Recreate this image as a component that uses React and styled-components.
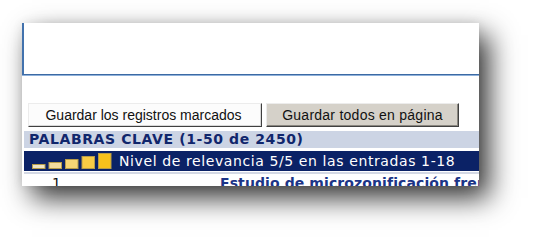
import React from "react"
import styled, { createGlobalStyle } from "styled-components"

const Global = createGlobalStyle`
  html, body {
    margin: 0;
    padding: 0;
    background: #ffffff;
    overflow: hidden;
  }
`

const Stage = styled.div`
  width: 534px;
  height: 241px;
  padding: 23px 0 0 22px;
  box-sizing: border-box;
`

const Card = styled.div`
  width: 457px;
  height: 163px;
  background: #ffffff;
  overflow: hidden;
  box-shadow: 10px 12px 26px rgba(0, 0, 0, 0.8), 0 0 10px rgba(0, 0, 0, 0.08);
  display: flex;
  flex-direction: column;
`

const TextBox = styled.div`
  height: 51px;
  flex: none;
  border-left: 2px solid #4272ad;
  border-bottom: 1px solid #3c6aa4;
  box-shadow: 0 1px 0 #8fb1da;
`

const Actions = styled.div`
  display: flex;
  gap: 4px;
  margin: 28px 0 0 6px;
`

const Button = styled.div`
  height: 24px;
  width: ${p => p.$w}px;
  box-sizing: border-box;
  display: flex;
  align-items: center;
  justify-content: center;
  padding-right: ${p => (p.$grey ? 0 : 3)}px;
  font-family: "Liberation Sans", Arial, sans-serif;
  font-size: 14px;
  letter-spacing: ${p => (p.$grey ? 0.25 : 0)}px;
  color: #111111;
  background: ${p => (p.$grey ? "#d5d1c9" : "#fcfcfc")};
  border: 1px solid;
  border-color: #ececec #404040 #404040 #ececec;
  box-shadow: inset -1px -1px 0 ${p => (p.$grey ? "#8a8780" : "#d8d8d8")};
`

const Table = styled.div`
  margin: 4px 0 0 2px;
  display: flex;
  flex-direction: column;
`

const Heading = styled.div`
  height: 17px;
  background: #ccd4e4;
  color: #10266c;
  font-family: "DejaVu Sans", Verdana, sans-serif;
  font-weight: bold;
  font-size: 14px;
  letter-spacing: 0.6px;
  line-height: 17px;
  padding-left: 5px;
  white-space: nowrap;
`

const Band = styled.div`
  margin-top: 3px;
  height: 20px;
  background: #0b2266;
  color: #ffffff;
  display: flex;
  align-items: center;
  gap: 7px;
  padding-left: 8px;
  font-family: "DejaVu Sans", Verdana, sans-serif;
  font-size: 14px;
  letter-spacing: 0.6px;
  white-space: nowrap;
  border-bottom: 1px solid #ffffff;
`

const Rule = styled.div`
  height: 2px;
  background: #d3d8e4;
`

const Row = styled.div`
  display: flex;
  align-items: baseline;
  padding-top: 1px;
  font-family: "DejaVu Sans", Verdana, sans-serif;
  font-size: 14px;
  white-space: nowrap;
`

const Num = styled.span`
  width: 196px;
  flex: none;
  padding-left: 28px;
  box-sizing: border-box;
  color: #111111;
`

const Title = styled.span`
  color: #1b3487;
  font-weight: bold;
  letter-spacing: 0.1px;
  text-decoration: underline;
`

const bars = [
  { h: 4, fill: "#efe5c6" },
  { h: 6, fill: "#f3dc9e" },
  { h: 9, fill: "#f6d676" },
  { h: 12, fill: "#f8cb45" },
  { h: 15, fill: "#f7c11c" },
]

const Relevance = () => (
  <svg width="80" height="16" viewBox="0 0 80 16">
    {bars.map((b, i) => (
      <rect
        key={i}
        x={i * 16.5 + 0.5}
        y={15.5 - b.h}
        width={12.5}
        height={b.h}
        fill={b.fill}
        stroke="#b79c48"
        strokeWidth="1"
      />
    ))}
  </svg>
)

export default function App() {
  return (
    <Stage>
      <Global />
      <Card>
        <TextBox />
        <Actions>
          <Button $w={234}>Guardar los registros marcados</Button>
          <Button $w={193} $grey>Guardar todos en página</Button>
        </Actions>
        <Table>
          <Heading>PALABRAS CLAVE (1-50 de 2450)</Heading>
          <Band>
            <Relevance />
            Nivel de relevancia 5/5 en las entradas 1-18
          </Band>
          <Rule />
          <Row>
            <Num>1</Num>
            <Title>Estudio de microzonificación frente</Title>
          </Row>
        </Table>
      </Card>
    </Stage>
  )
}
